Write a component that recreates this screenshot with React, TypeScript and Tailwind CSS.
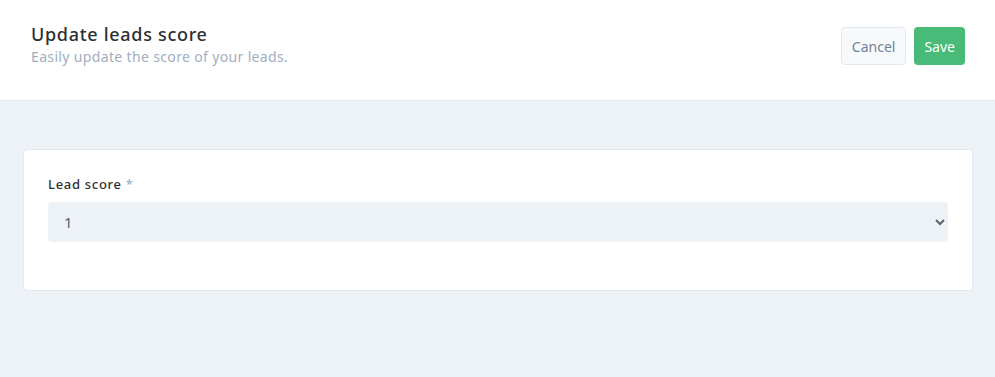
import React from "react";

export default function App() {
  return (
    <div className="w-[995px] h-[377px] bg-[#edf2f7] flex flex-col" style={{ fontFamily: '"Noto Sans", "Open Sans", sans-serif' }}>
      <div className="h-[101px] bg-white border-b border-[#e2e8f0] flex items-start justify-between pl-[31px] pr-[30px] pt-[22px]">
        <div>
          <h1 className="text-[18px] leading-[24px] font-medium text-[#2d3033] tracking-[0.7px]">Update leads score</h1>
          <p className="text-[14px] leading-[20px] text-[#a0aec0] mt-[1px] tracking-[0.35px]">Easily update the score of your leads.</p>
        </div>
        <div className="flex gap-[8px] pt-[5px]">
          <button className="h-[38px] px-[10px] rounded-[4px] border border-[#e2e8f0] bg-[#f7fafc] text-[#718096] text-[14px]">Cancel</button>
          <button className="h-[38px] px-[10px] rounded-[4px] bg-[#48bb78] text-white text-[14px]">Save</button>
        </div>
      </div>
      <div className="pl-[23px] pr-[22px] pt-[48px]">
        <div className="h-[142px] bg-white border border-[#e2e8f0] rounded-[4px] px-[24px] pt-[25px]">
          <label className="block text-[13px] leading-[18px] font-medium text-[#2d3033] tracking-[0.7px]">
            Lead score <span className="text-[#a0aec0]">*</span>
          </label>
          <select className="mt-[9px] w-full h-[40px] bg-[#edf2f7] rounded-[4px] pl-[12px] pr-[6px] text-[15px] text-[#5a6270] outline-none">
            <option>1</option>
          </select>
        </div>
      </div>
    </div>
  );
}
